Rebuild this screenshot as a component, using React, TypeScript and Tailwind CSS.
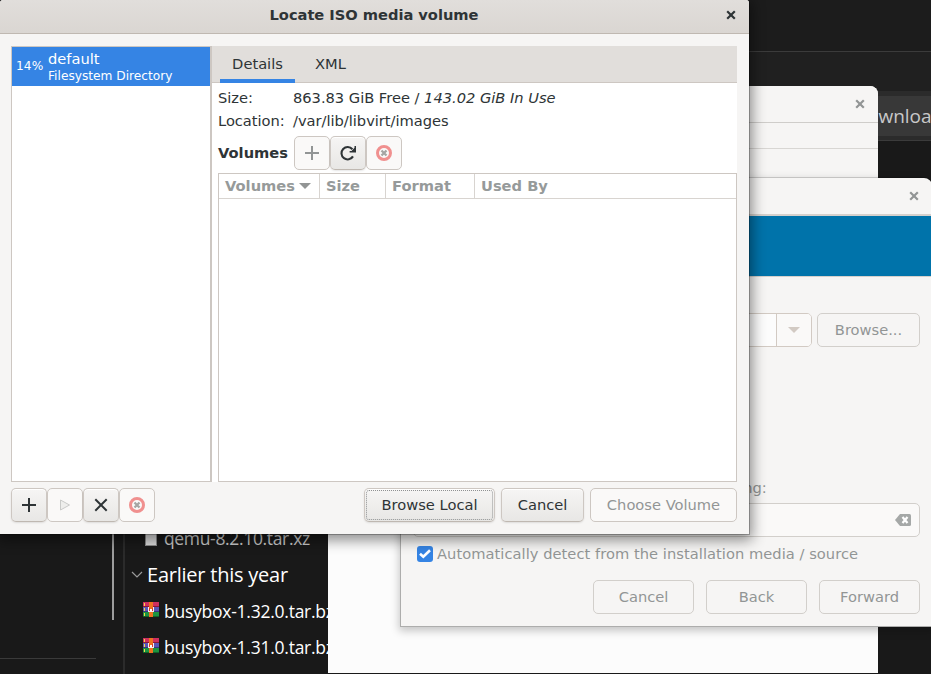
import type { ReactNode } from "react";

const gtk = "font-['DejaVu_Sans',sans-serif] text-[14.67px] leading-[18px]";
const winFont = "font-['Open_Sans',sans-serif]";

function Close({ color }: { color: string }) {
  return (
    <svg width="10" height="10" viewBox="0 0 10 10" fill="none" stroke={color} strokeWidth="2.2">
      <path d="M1.2 1.2 8.8 8.8M8.8 1.2 1.2 8.8" />
    </svg>
  );
}

function Plus({ color }: { color: string }) {
  return (
    <svg width="16" height="16" viewBox="0 0 16 16" stroke={color} strokeWidth="2">
      <path d="M8 1v14M1 8h14" />
    </svg>
  );
}

function Refresh() {
  return (
    <svg width="16" height="16" viewBox="0 0 16 16" fill="none">
      <path d="M12.400 4.200A6.200 6.200 0 1 0 13 11.400" stroke="#2e3436" strokeWidth="2.100" />
      <path d="M16 1v6.500H9.600V6H11.500L14.500 2.800V1z" fill="#2e3436" />
    </svg>
  );
}

function Stop() {
  return (
    <svg width="16" height="16" viewBox="0 0 16 16" fill="none">
      <circle cx="8" cy="8" r="6.500" stroke="#f0908f" strokeWidth="3" />
      <path d="M5.500 5.500l5 5M10.500 5.500l-5 5" stroke="#a5a5a3" strokeWidth="2.300" />
    </svg>
  );
}

function Button({ children, size, off, focus }: { children: ReactNode; size: string; off?: boolean; focus?: boolean }) {
  const look = off
    ? "border-[#cdc7c2] bg-[#faf9f8] text-[#929595]"
    : "border-[#cdc7c2] border-b-[#bfb8b1] bg-linear-to-b from-[#f6f5f4] to-[#e8e7e5] text-[#2e3436] shadow-[0_1px_2px_rgba(0,0,0,0.10),inset_0_1px_#ffffff]";
  return (
    <div className={`relative flex h-[34px] shrink-0 items-center justify-center rounded-[5px] border ${look} ${size}`}>
      {children}
      {focus && <div className="absolute inset-[1px] rounded-[3px] border border-dotted border-[#8f9192]" />}
    </div>
  );
}

function GhostButton({ children, size }: { children: ReactNode; size: string }) {
  return (
    <div className={`flex h-[34px] shrink-0 items-center justify-center rounded-[5px] border border-[#d2cfcb] text-[#929595] ${size}`}>
      {children}
    </div>
  );
}

function Archive() {
  return (
    <svg width="16" height="15" viewBox="0 0 16 15" shapeRendering="crispEdges">
      <rect width="16" height="5" fill="#cf2f5f" />
      <rect y="5" width="16" height="5" fill="#5a55b5" />
      <rect y="10" width="16" height="5" fill="#1c9440" />
      <path d="M0 4h16v1H0z" fill="#8c1839" />
      <path d="M0 9h16v1H0z" fill="#37347f" />
      <path d="M0 14h16v1H0z" fill="#0f6328" />
      <rect x="6" width="4" height="15" fill="#ee7220" />
      <path d="M1 1h1v3H1zM1 6h1v3H1zM1 11h1v3H1z" fill="#f5d94a" />
      <path d="M5 5h1v4h4V5h1v5H5z" fill="#f6eeee" />
      <path d="M6 6h1v3H6zM9 6h1v3H9z" fill="#d8392f" />
      <path d="M7 7h2v2H7z" fill="#ffffff" />
    </svg>
  );
}

function Explorer() {
  return (
    <div className={`absolute top-[520px] left-0 flex h-[154px] w-[328px] overflow-hidden bg-[#191919] text-white ${winFont}`}>
      <div className="flex w-[112px] flex-col pt-[138px]">
        <div className="h-px w-[96px] bg-[#3a3a3a]" />
      </div>
      <div className="h-[100px] w-[2px] bg-[#9d9d9d]" />
      <div className="ml-[9px] w-[2px] bg-[#2b2b2b]" />
      <div className="flex flex-1 flex-col overflow-hidden whitespace-nowrap">
        <div className="flex h-[37px] items-center pl-[20px] text-[17.5px] tracking-[-0.34px]">
          <div className="mt-[-2px] h-[16px] w-[12px] border border-[#8a8a8a] bg-[#dcdcdc]" />
          <span className="ml-[7px] text-[#c9c9c9]">qemu-8.2.10.tar.xz</span>
        </div>
        <div className="flex h-[36px] items-center pl-[6px] text-[20px] tracking-[-0.23px]">
          <svg width="12" height="8" viewBox="0 0 12 8" fill="none" stroke="#9a9a9a" strokeWidth="1.2">
            <path d="M1 1l5 5 5-5" />
          </svg>
          <span className="ml-[4px]">Earlier this year</span>
        </div>
        {["busybox-1.32.0.tar.bz2", "busybox-1.31.0.tar.bz2"].map((name) => (
          <div key={name} className="flex h-[36px] items-center pl-[18px] text-[17.5px] tracking-[-0.25px]">
            <div className="mt-[-4px]">
              <Archive />
            </div>
            <span className="ml-[5px]">{name}</span>
          </div>
        ))}
      </div>
    </div>
  );
}

function Browser() {
  return (
    <div className={`absolute inset-0 flex flex-col bg-[#191919] ${winFont}`}>
      <div className="box-content h-[51px] border-b border-[#3b3b3b] bg-[#1c1c1c]" />
      <div className="flex h-[88px] flex-col bg-[#202020] pt-[39px]">
        <div className="flex h-[49px] items-center justify-end bg-[#2b2b2b]">
          <div className="flex h-[40px] w-full items-center justify-end overflow-hidden bg-[#383838] pt-[2px]">
            <span className="w-[64px] text-[19px] whitespace-nowrap text-[#c8c8c8]">ownloads</span>
          </div>
        </div>
      </div>
      <div className="h-px bg-[#3b3b3b]" />
    </div>
  );
}

function Manager() {
  return (
    <div className={`absolute top-[86px] left-[328px] flex h-[587px] w-[550px] flex-col overflow-hidden rounded-t-[8px] bg-[#fcfcfc] ${gtk}`}>
      <div className="flex h-[37px] items-center justify-end border-b border-[#cfcdca] bg-[#f6f5f4] pr-[13px]">
        <Close color="#929595" />
      </div>
      <div className="h-[26px] border-b border-[#d8d6d3] bg-[#f6f5f4]" />
      <div className="h-[40px] bg-[#f6f5f4]" />
    </div>
  );
}

function Wizard() {
  return (
    <div className={`absolute top-[178px] left-[400px] flex h-[449px] w-[532px] flex-col overflow-hidden rounded-t-[8px] border-b border-l border-[#adadac] bg-[#f6f5f4] text-[#929595] shadow-[0_3px_9px_1px_rgba(0,0,0,0.22),0_-1px_rgba(0,0,0,0.15)] ${gtk}`}>
      <div className="flex h-[38px] shrink-0 items-center justify-end border-b-2 border-[#d5d0cc] pr-[13px]">
        <Close color="#929595" />
      </div>
      <div className="h-[61px] shrink-0 border-b border-[#d5d0cc] bg-[#0073aa]" />
      <div className="flex flex-1 flex-col px-[12px] pt-[36px]">
        <div className="flex justify-end gap-[5px]">
          <div className="flex h-[34px] w-[380px] rounded-[5px] border border-[#d2cac3] bg-[#fcfcfc]">
            <div className="flex-1" />
            <div className="flex w-[35px] items-center justify-center rounded-r-[4px] border-l border-[#d2cac3] bg-[#faf9f8]">
              <div className="h-0 w-0 border-x-[6px] border-t-[6px] border-x-transparent border-t-[#d2cac3]" />
            </div>
          </div>
          <GhostButton size="w-[103px]">Browse...</GhostButton>
        </div>
        <div className="mt-[132px] tracking-[0.04px] whitespace-nowrap">Choose the operating system you are installing:</div>
        <div className="mt-[6px] flex h-[34px] items-center justify-end rounded-[5px] border border-[#d2cfcb] bg-[#faf9f8] pr-[8px]">
          <svg width="16" height="12" viewBox="0 0 16 12">
            <path d="M5 0h9.5Q16 0 16 1.5v9Q16 12 14.500 12H5L0 6z" fill="#a5a8a7" />
            <path d="M7.500 3l5 6M12.500 3l-5 6" stroke="#fff" strokeWidth="2.200" />
          </svg>
        </div>
        <div className="mt-[9px] flex h-[16px] items-center gap-[4px] pl-[4px] whitespace-nowrap">
          <div className="flex h-[16px] w-[16px] items-center justify-center rounded-[3px] bg-[#3584e4]">
            <svg width="12" height="10" viewBox="0 0 12 10" fill="none" stroke="#fff" strokeWidth="2.600">
              <path d="M1 4.800l3.300 3L11 1.300" />
            </svg>
          </div>
          <span className="tracking-[0.04px]">Automatically detect from the installation media / source</span>
        </div>
        <div className="mt-[18px] flex justify-end gap-[12px]">
          <GhostButton size="w-[101px]">Cancel</GhostButton>
          <GhostButton size="w-[101px]">Back</GhostButton>
          <GhostButton size="w-[101px]">Forward</GhostButton>
        </div>
      </div>
    </div>
  );
}

function Dialog() {
  return (
    <div className={`absolute top-0 left-0 flex h-[534px] w-[749px] flex-col overflow-hidden rounded-t-[3px] bg-[#f6f5f4] text-[#2e3436] shadow-[0_0_0_1px_rgba(0,0,0,0.25),0_3px_14px_3px_rgba(0,0,0,0.45)] ${gtk}`}>
      <div className="flex h-[34px] shrink-0 items-center border-b border-[#bfb8b1] bg-linear-to-b from-[#e1dedb] to-[#dad6d2] pr-[13px] pb-[3px] pl-[22px]">
        <div className="flex-1 text-center font-bold tracking-[-0.03px]">Locate ISO media volume</div>
        <Close color="#2e3436" />
      </div>
      <div className="mt-[12px] flex h-[436px] pr-[12px] pl-[11px]">
        <div className="w-[200px] shrink-0 border border-[#cdc7c2] bg-white">
          <div className="flex h-[39px] bg-[#3584e4] pt-[3px] pl-[4px] text-white">
            <span className="w-[32px] pt-[8px] text-[12.2px] leading-[17px] tracking-[0.1px]">14%</span>
            <div className="whitespace-nowrap">
              <div className="leading-[17px]">default</div>
              <div className="pt-px text-[12.2px] leading-[16px]">Filesystem Directory</div>
            </div>
          </div>
        </div>
        <div className="w-px bg-[#cdc7c2]" />
        <div className="flex flex-1 flex-col bg-white">
          <div className="flex h-[37px] shrink-0 border-b border-[#cdc7c2] bg-[#e1dedb] pl-[8px]">
            <div className="mb-[-1px] flex w-[75px] items-center justify-center border-b-4 border-[#3584e4] pt-[2px]">Details</div>
            <div className="flex w-[71px] items-center justify-center">XML</div>
          </div>
          <div className="flex flex-1 flex-col pl-[6px]">
            <div className="mt-[6px] grid grid-cols-[75px_1fr] gap-y-[5px] tracking-[-0.02px]">
              <div>Size:</div>
              <div>
                863.83 GiB Free / <i>143.02 GiB In Use</i>
              </div>
              <div>Location:</div>
              <div>/var/lib/libvirt/images</div>
            </div>
            <div className="mt-[6px] flex items-center">
              <div className="w-[76px] font-bold">Volumes</div>
              <Button size="w-[36px]" off><Plus color="#929595" /></Button>
              <Button size="w-[36px]"><Refresh /></Button>
              <Button size="w-[36px]" off><Stop /></Button>
            </div>
            <div className="mt-[3px] flex-1 border border-[#cdc7c2]">
              <div className="flex h-[25px] items-center border-b border-[#d8d4d0] font-bold text-[#969a9a]">
                <div className="flex h-full w-[101px] items-center gap-[4px] border-r border-[#d8d4d0] pl-[6px]">
                  Volumes
                  <div className="h-0 w-0 border-x-[6px] border-t-[6px] border-x-transparent border-t-[#929595]" />
                </div>
                <div className="flex h-full w-[66px] items-center border-r border-[#d8d4d0] pl-[6px]">Size</div>
                <div className="flex h-full w-[89px] items-center border-r border-[#d8d4d0] pl-[6px]">Format</div>
                <div className="pl-[6px]">Used By</div>
              </div>
            </div>
          </div>
        </div>
      </div>
      <div className="mt-[6px] flex pr-[12px] pl-[11px]">
        <Button size="w-[36px]"><Plus color="#2e3436" /></Button>
        <Button size="w-[36px]" off>
          <svg width="12" height="12" viewBox="0 0 12 12" fill="#eeeeec" stroke="#c9cac8" strokeWidth="1">
            <path d="M1.500 1v10L10.500 6z" />
          </svg>
        </Button>
        <Button size="w-[36px]">
          <svg width="14" height="14" viewBox="0 0 14 14" fill="none" stroke="#2e3436" strokeWidth="2">
            <path d="M1.300 1.300l11.400 11.400M12.700 1.300 1.300 12.700" />
          </svg>
        </Button>
        <Button size="w-[36px]" off><Stop /></Button>
        <div className="flex flex-1 justify-end gap-[6px]">
          <Button size="w-[131px]" focus>Browse Local</Button>
          <Button size="w-[83px]">Cancel</Button>
          <Button size="w-[147px]" off>Choose Volume</Button>
        </div>
      </div>
    </div>
  );
}

export default function App() {
  return (
    <div className="relative h-[674px] w-[931px] overflow-hidden bg-[#191919]">
      <Browser />
      <Explorer />
      <Manager />
      <Wizard />
      <Dialog />
    </div>
  );
}
